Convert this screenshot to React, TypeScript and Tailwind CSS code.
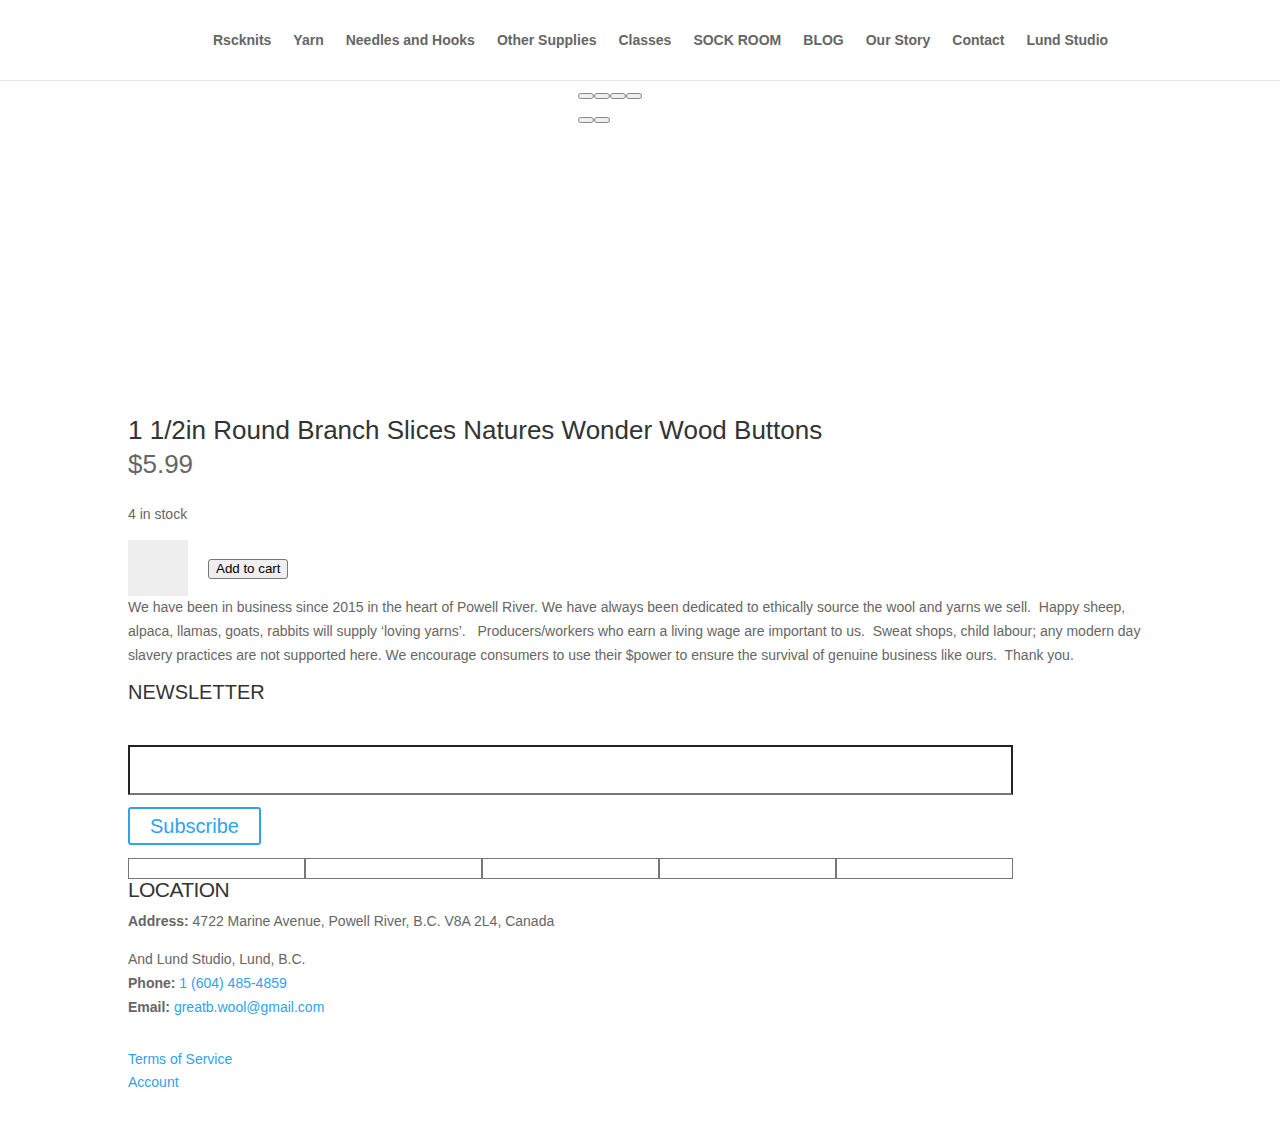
import React from 'react'

const navItems = [
  "Rscknits",
  "Yarn",
  "Needles and Hooks",
  "Other Supplies",
  "Classes",
  "SOCK ROOM",
  "BLOG",
  "Our Story",
  "Contact",
  "Lund Studio",
];

const Pill = () => (
  <span className="block w-[16px] h-[6px] rounded-full border border-[#888] bg-[#efefef]" />
);

const App = () => {
  return (
    <div className="min-h-[1123px] bg-white text-[#666] font-['Liberation_Sans',Arial,sans-serif]">
      {/* header */}
      <header className="h-[81px] border-b border-[#e5e5e5]">
        <nav className="flex items-center h-full pl-[213px] gap-[22px] text-[14px] font-bold text-[#666]">
          {navItems.map((item) => (
            <a key={item} className="whitespace-nowrap">{item}</a>
          ))}
        </nav>
      </header>

      {/* gallery placeholders */}
      <div className="flex flex-col items-start pl-[578px] pt-[12px] h-[332px]">
        <div className="flex">
          <Pill /><Pill /><Pill /><Pill />
        </div>
        <div className="flex mt-[18px]">
          <Pill /><Pill />
        </div>
      </div>

      <main className="w-[1024px] mx-auto">
        <h1 className="text-[26px] leading-[35px] text-[#333] font-normal">
          1 1/2in Round Branch Slices Natures Wonder Wood Buttons
        </h1>
        <p className="text-[26px] leading-[32px] text-[#666]">$5.99</p>

        <p className="text-[14px] leading-[24px] mt-[22px]">4 in stock</p>

        <div className="flex items-center mt-[14px]">
          <div className="w-[60px] h-[56px] bg-[#eee]" />
          <button className="ml-[20px] mt-[1px] h-[20px] px-[7px] text-[13.33px] leading-none text-black bg-[#efefef] border border-[#767676] rounded-[3px]">
            Add to cart
          </button>
        </div>

        <p className="text-[14px] leading-[24px] text-[#666] pr-[6px] -mt-[1px]">
          We have been in business since 2015 in the heart of Powell River. We have always been dedicated to ethically source the wool and yarns we sell.&nbsp; Happy sheep, alpaca, llamas, goats, rabbits will supply ‘loving yarns’. &nbsp; Producers/workers who earn a living wage are important to us.&nbsp; Sweat shops, child labour; any modern day slavery practices are not supported here. We encourage consumers to use their $power to ensure the survival of genuine business like ours.&nbsp; Thank you.
        </p>

        <h3 className="text-[20px] leading-[24px] text-[#333] mt-[13px]">NEWSLETTER</h3>

        <div className="w-[885px] h-[50px] border-2 border-[#222] border-b-[#777] mt-[41px]" />

        <button className="mt-[12px] w-[133px] h-[38px] border-2 border-[#2ea3f2] rounded-[3px] text-[20px] text-[#2ea3f2] bg-white">
          Subscribe
        </button>

        <div className="flex w-[885px] mt-[13px]">
          {[0, 1, 2, 3, 4].map((i) => (
            <div key={i} className="flex-1 h-[21px] border border-[#777]" />
          ))}
        </div>

        <h3 className="text-[21px] leading-[22px] text-[#333] tracking-[-0.6px]">LOCATION</h3>

        <div className="text-[14px] leading-[24px] text-[#666] mt-[8px]">
          <p><strong className="font-bold">Address:</strong> 4722 Marine Avenue, Powell River, B.C. V8A 2L4, Canada</p>
          <p className="mt-[14px]">And Lund Studio, Lund, B.C.</p>
          <p><strong className="font-bold">Phone:</strong> <a className="text-[#2ea3f2]">1 (604) 485-4859</a></p>
          <p><strong className="font-bold">Email:</strong> <a className="text-[#2ea3f2]">greatb.wool@gmail.com</a></p>
          <div className="mt-[29px] flex flex-col leading-[23px]">
            <a className="text-[#2ea3f2]">Terms of Service</a>
            <a className="text-[#2ea3f2]">Account</a>
          </div>
        </div>
      </main>
    </div>
  );
}

export default App
